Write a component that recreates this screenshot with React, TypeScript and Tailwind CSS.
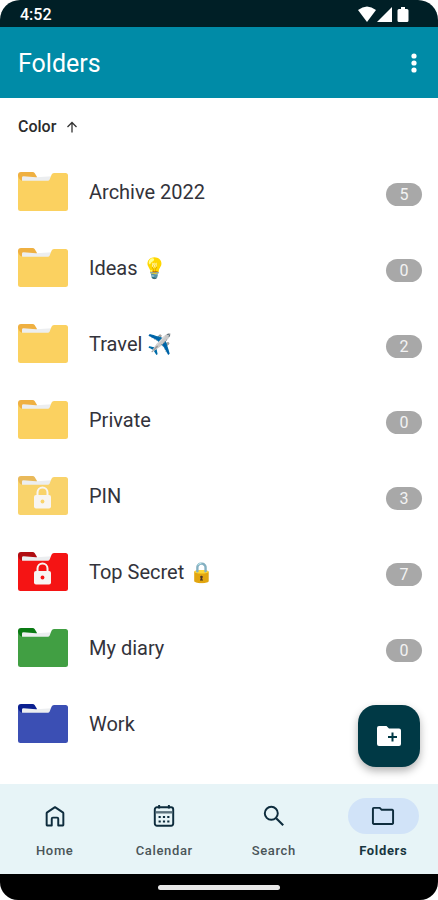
import { ReactNode } from "react";

interface FolderItem {
    name: string;
    count?: number;
    front: string;
    back: string;
    locked?: boolean;
}

const folders: FolderItem[] = [
    { name: "Archive 2022", count: 5, front: "#fbd160", back: "#efb041" },
    { name: "Ideas 💡", count: 0, front: "#fbd160", back: "#efb041" },
    { name: "Travel ✈️", count: 2, front: "#fbd160", back: "#efb041" },
    { name: "Private", count: 0, front: "#fbd160", back: "#efb041" },
    { name: "PIN", count: 3, front: "#f9d36b", back: "#e9b95a", locked: true },
    { name: "Top Secret 🔒", count: 7, front: "#f51414", back: "#b00d12", locked: true },
    { name: "My diary", count: 0, front: "#419f43", back: "#0b7a14" },
    { name: "Work", front: "#3b4fb4", back: "#0b2090" },
];

const FolderIcon = ({ front, back, locked }: Pick<FolderItem, "front" | "back" | "locked">) => (
    <svg viewBox="0 0 50 40" className="w-[50px] h-10 shrink-0" aria-hidden="true">
        <path fill={back} d="M0 3a3 3 0 0 1 3-3h11.500q1.500 0 2.300 1.300L19 5v7H0z" />
        <path fill="#eceef0" d="M4 5.500Q4 4.300 5.500 4.300L18 5.200 34 4.200V12H4z" />
        <path
            fill={front}
            d="M0 4Q1.500 8.800 5 8.800H29.800Q31.200 8.800 31.800 7.300L33.500 2.800Q34.200 1 36 1H47.500A2.500 2.500 0 0 1 50 3.500V36.500A2.500 2.500 0 0 1 47.500 39H2.500A2.500 2.500 0 0 1 0 36.500z"
        />
        {locked && (
            <>
                <path d="M19.500 20v-3.500a5 5 0 0 1 10 0V20" fill="none" stroke="#f8f5f2" strokeWidth="2" />
                <rect x="16" y="19" width="17" height="13.500" rx="2" fill="#f8f5f2" />
                <circle cx="24.500" cy="25.500" r="1.900" fill={front} />
            </>
        )}
    </svg>
);

const StatusBar = () => (
    <div className="h-[27px] pl-5 pr-7 flex items-center justify-between bg-[#001f26] rounded-t-[20px] text-white">
        <span className="text-base font-medium pt-0.5">4:52</span>
        <svg viewBox="0 0 52 18" className="w-[52px] h-[18px]" fill="#fff" aria-hidden="true">
            <path d="M0 5Q9 -2 18 5L9 17z" />
            <path d="M34 2v15H19z" />
            <path d="M43 2h4v2h2q1.500 0 1.500 1.500v10q0 1.500-1.500 1.500h-8q-1.500 0-1.500-1.500v-10Q39.500 4 41 4h2z" />
        </svg>
    </div>
);

const FolderRow = ({ name, count, front, back, locked }: FolderItem) => (
    <li className="h-[76px] flex items-center pl-[18px] pr-4">
        <FolderIcon front={front} back={back} locked={locked} />
        <span className="flex-1 ml-[21px] text-xl text-[#33333b]">{name}</span>
        {count !== undefined && (
            <span className="w-9 h-[23px] mt-1 rounded-full bg-[#a8a8a8] text-[#f3f3f3] text-base leading-6 text-center">
                {count}
            </span>
        )}
    </li>
);

interface NavItemProps {
    label: string;
    active?: boolean;
    children: ReactNode;
}

const NavItem = ({ label, active, children }: NavItemProps) => (
    <a
        href="#"
        aria-current={active ? "page" : undefined}
        className="flex flex-col items-center gap-2 pt-[14px]"
    >
        <span className={active ? "w-[71px] h-9 flex items-center justify-center rounded-full bg-[#d1e3f8]" : "w-[71px] h-9 flex items-center justify-center"}>
            <svg viewBox="0 0 24 24" className="w-[26px] h-[26px]" fill="none" stroke="#0e2c3d" strokeWidth="1.800" aria-hidden="true">
                {children}
            </svg>
        </span>
        <span className={active ? "text-[13px] leading-[18px] tracking-wider font-bold text-[#17363f]" : "text-[13px] leading-[18px] tracking-wider font-medium text-[#4a5558]"}>
            {label}
        </span>
    </a>
);

const App = () => {
    return (
        <div className="relative min-h-screen flex flex-col bg-white font-['Roboto','Noto_Color_Emoji',sans-serif]">
            <StatusBar />
            <header className="h-[71px] pl-[18px] pr-4 flex items-center justify-between bg-[#008ba7] text-white">
                <h1 className="text-[25px] pt-0.5">Folders</h1>
                <button type="button" aria-label="More options" className="w-4 h-7 flex items-center justify-center">
                    <svg viewBox="0 0 6 20" className="w-[6px] h-5" fill="#fff" aria-hidden="true">
                        <circle cx="3" cy="3" r="2.600" />
                        <circle cx="3" cy="10" r="2.600" />
                        <circle cx="3" cy="17" r="2.600" />
                    </svg>
                </button>
            </header>

            <main className="flex-1">
                <button type="button" className="h-14 pl-[18px] pt-0.5 flex items-center gap-[10px] text-base font-medium text-[#2b2b2b]">
                    Color
                    <svg viewBox="0 0 12 12" className="w-3 h-3" fill="none" stroke="#333" strokeWidth="1.300" aria-hidden="true">
                        <path d="M6 11.500V1.500M1.500 6 6 1.500 10.500 6" />
                    </svg>
                </button>
                <ul>
                    {folders.map((folder) => (
                        <FolderRow key={folder.name} {...folder} />
                    ))}
                </ul>
            </main>

            <button
                type="button"
                aria-label="New folder"
                className="absolute right-[18px] bottom-[133px] w-[62px] h-[62px] flex items-center justify-center rounded-[18px] bg-[#003945] shadow-[0_4px_9px_rgba(0,0,0,0.3)]"
            >
                <svg viewBox="0 0 24 20" className="w-6 h-5" aria-hidden="true">
                    <path fill="#fff" d="M2 0h7.500l2.500 2.500h10a2 2 0 0 1 2 2V18a2 2 0 0 1-2 2H2a2 2 0 0 1-2-2V2a2 2 0 0 1 2-2z" />
                    <path stroke="#003945" strokeWidth="2" d="M15.500 6.500v9M11 11h9" />
                </svg>
            </button>

            <nav className="h-[90px] grid grid-cols-4 bg-[#e7f4f7]">
                <NavItem label="Home">
                    <path strokeLinejoin="round" d="M4.300 9.500Q4.300 9 4.800 8.600L12 3.800l7.200 4.800q.5.400.5.900V20a.8.800 0 0 1-.8.800H15V14.500a1 1 0 0 0-1-1h-4a1 1 0 0 0-1 1v6.300H5.100a.8.800 0 0 1-.8-.8z" />
                </NavItem>
                <NavItem label="Calendar">
                    <rect x="3.500" y="4" width="17" height="17" rx="2" />
                    <path d="M7.500 1.800V5M16.500 1.800V5" />
                    <path strokeWidth="2.200" stroke="#5b717c" d="M4.400 8.600h15.200" />
                    <path strokeDasharray="2 2" d="M7 13h10M7 17h10" />
                </NavItem>
                <NavItem label="Search">
                    <circle cx="9.500" cy="9.500" r="6" />
                    <path strokeWidth="2" d="m14 14 6.500 6.500" />
                </NavItem>
                <NavItem label="Folders" active>
                    <path strokeWidth="1.800" strokeLinejoin="round" d="M3.500 4.500h5.500l1.800 1.800h9.700a.8.800 0 0 1 .8.800v11.400a.8.800 0 0 1-.8.800h-17a.8.800 0 0 1-.8-.8V5.300a.8.800 0 0 1 .8-.8z" />
                </NavItem>
            </nav>
            <div className="h-[26px] flex items-center justify-center bg-black rounded-b-[18px]">
                <div className="w-[122px] h-[5px] rounded-full bg-[#e8e8e8]" />
            </div>
        </div>
    );
};

export default App;
